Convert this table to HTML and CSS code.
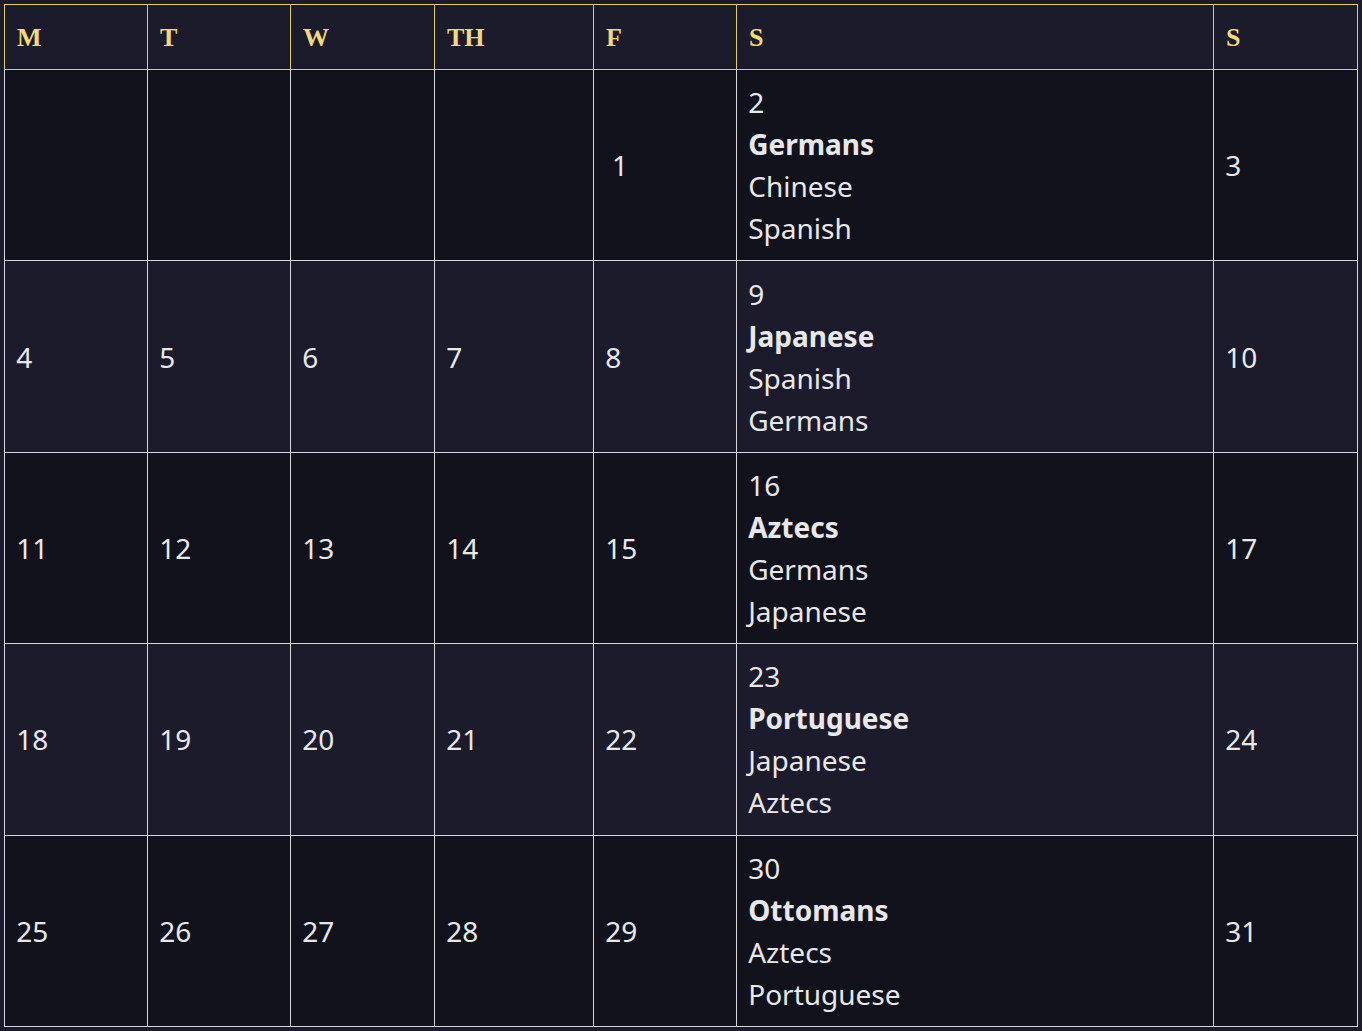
FILE: index.html
```html
<!DOCTYPE html>
<html lang="en">
<head>
<meta charset="utf-8">
<title>Calendar</title>
<link rel="stylesheet" href="styles.css">
</head>
<body>
<table class="cal">
  <colgroup>
    <col class="c-m"><col class="c-t"><col class="c-w"><col class="c-th"><col class="c-f"><col class="c-sa"><col class="c-su">
  </colgroup>
  <thead>
    <tr><th>M</th><th>T</th><th>W</th><th>TH</th><th>F</th><th>S</th><th>S</th></tr>
  </thead>
  <tbody>
    <tr>
      <td></td><td></td><td></td><td></td><td class="first">1</td>
      <td><div>2</div><div class="main">Germans</div><div>Chinese</div><div>Spanish</div></td>
      <td>3</td>
    </tr>
    <tr>
      <td>4</td><td>5</td><td>6</td><td>7</td><td>8</td>
      <td><div>9</div><div class="main">Japanese</div><div>Spanish</div><div>Germans</div></td>
      <td>10</td>
    </tr>
    <tr>
      <td>11</td><td>12</td><td>13</td><td>14</td><td>15</td>
      <td><div>16</div><div class="main">Aztecs</div><div>Germans</div><div>Japanese</div></td>
      <td>17</td>
    </tr>
    <tr>
      <td>18</td><td>19</td><td>20</td><td>21</td><td>22</td>
      <td><div>23</div><div class="main">Portuguese</div><div>Japanese</div><div>Aztecs</div></td>
      <td>24</td>
    </tr>
    <tr>
      <td>25</td><td>26</td><td>27</td><td>28</td><td>29</td>
      <td><div>30</div><div class="main">Ottomans</div><div>Aztecs</div><div>Portuguese</div></td>
      <td>31</td>
    </tr>
  </tbody>
</table>
</body>
</html>
```
FILE: styles.css
```css
html, body {
  background: #1c1b2b;
}
body {
  margin: 4px;
  font-family: "Noto Sans", "Open Sans", sans-serif;
  color: #e8e8ec;
}
.cal {
  width: 1353px;
  border-collapse: collapse;
  table-layout: fixed;
}
.c-m { width: 143px; }
.c-t { width: 143px; }
.c-w { width: 144px; }
.c-th { width: 159px; }
.c-f { width: 143px; }
.c-sa { width: 477px; }
.c-su { width: 144px; }
.cal th {
  font-family: "Liberation Serif", "Times New Roman", serif;
  font-weight: bold;
  font-size: 26px;
  line-height: 42px;
  color: #f2d97a;
  text-align: left;
  padding: 12px 12px 10px;
  border: 1px solid #e3cc68;
  background: #1c1b2b;
}
.cal td {
  font-size: 28px;
  line-height: 42px;
  padding: 11.2px 11.2px;
  border: 1px solid #d6d6dc;
  vertical-align: middle;
  text-align: left;
}
.cal tbody tr:nth-child(odd) td {
  background: #12121c;
}
.cal tbody tr:nth-child(even) td {
  background: #1c1b2b;
}
.cal td.first {
  padding-left: 18px;
}
.main {
  font-weight: bold;
}
```
